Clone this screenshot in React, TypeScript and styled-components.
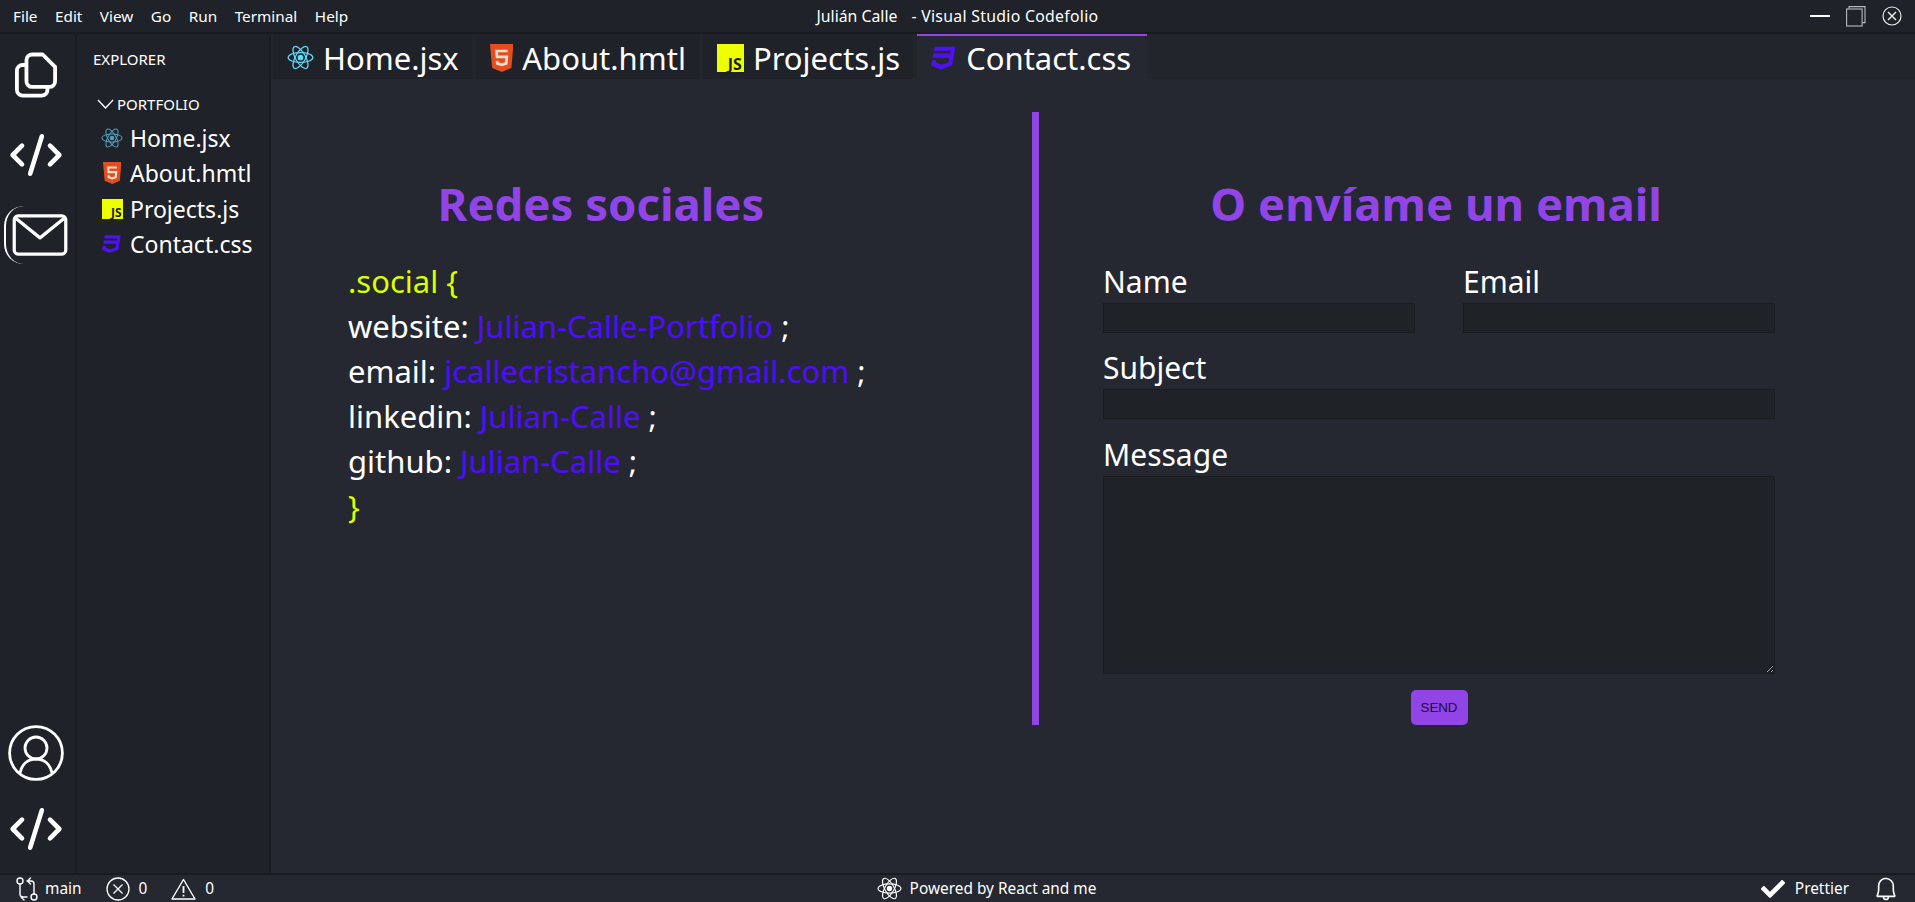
import React from "react";
import styled, { createGlobalStyle } from "styled-components";
import { CodeXml } from "lucide-react";
import { FaCheck, FaCss3 } from "react-icons/fa";
import { VscBell } from "react-icons/vsc";

const uiFont = `"Noto Sans", "Open Sans", sans-serif`;
const purple = "#9145e6";

const GlobalStyle = createGlobalStyle`
  html, body {
    margin: 0;
    height: 100%;
    overflow: hidden;
    background: #252830;
    color: #fff;
    font-family: ${uiFont};
  }
  * { box-sizing: border-box; }
`;

/* icons */
const ReactIcon = ({ size, color }: { size: number; color: string }) => (
  <svg width={size} height={size} viewBox="0 0 24 24" fill="none" stroke={color} strokeWidth="1.1">
    <ellipse cx="12" cy="12" rx="11" ry="4.4" />
    <ellipse cx="12" cy="12" rx="11" ry="4.4" transform="rotate(60 12 12)" />
    <ellipse cx="12" cy="12" rx="11" ry="4.4" transform="rotate(120 12 12)" />
    <circle cx="12" cy="12" r="2" fill={color} />
  </svg>
);

const HtmlIcon = ({ height }: { height: number }) => (
  <svg width={height * 0.84} height={height} viewBox="2 0 20 24" preserveAspectRatio="none">
    <path d="M2 0h20l-1.800 20.500L12 24l-8.200-3.500z" fill="#e44d1e" />
    <path d="M17 6H7.600l.4 5h8.300l-.5 5.600-3.800 1.200-3.800-1.200-.2-2.200" fill="none" stroke="#f4dccf" strokeWidth="2.300" />
  </svg>
);

const FilesIcon = () => (
  <svg width="42" height="47" viewBox="0 0 44 48" fill="none" stroke="#fff" strokeWidth="4" strokeLinejoin="round">
    <path d="M12 13H8a6 6 0 0 0-6 6v20a6 6 0 0 0 6 6h20a6 6 0 0 0 6-6v-3" />
    <path d="M18 2h11l13 13v15a6 6 0 0 1-6 6H18a6 6 0 0 1-6-6V8a6 6 0 0 1 6-6z" />
  </svg>
);

const MailIcon = () => (
  <svg width="56" height="42" viewBox="0 0 58 44" fill="none" stroke="#fff" strokeWidth="3.400" strokeLinejoin="round">
    <rect x="2" y="2" width="54" height="40" rx="4" />
    <path d="M3 4l26 21L55 4" />
  </svg>
);

const UserIcon = () => (
  <svg width="56" height="56" viewBox="0 0 56 56" fill="none" stroke="#fff" strokeWidth="2.800">
    <circle cx="28" cy="28" r="26.400" />
    <circle cx="28" cy="23" r="11" />
    <path d="M12 48c2-9 8-14 16-14s14 5 16 14" />
  </svg>
);

const BranchIcon = () => (
  <svg width="22" height="24" viewBox="0 0 22 24" fill="none" stroke="#fff" strokeWidth="1.400" strokeLinecap="round" strokeLinejoin="round">
    <circle cx="4" cy="4" r="3" />
    <circle cx="18" cy="20" r="3" />
    <path d="M4 7v10c0 2 1 3 3 3h4M8 23l-3-3" />
    <path d="M18 17V7c0-2-1-3-3-3h-4M14.500 1l-3 3 3 3" />
  </svg>
);

const ErrorIcon = () => (
  <svg width="24" height="24" viewBox="0 0 24 24" fill="none" stroke="#fff" strokeWidth="1.300">
    <circle cx="12" cy="12" r="11" />
    <path d="M7.500 7.500l9 9M16.500 7.500l-9 9" />
  </svg>
);

const WarningIcon = () => (
  <svg width="25" height="22" viewBox="0 0 25 22" fill="none" stroke="#fff" strokeWidth="1.400" strokeLinejoin="round">
    <path d="M12.500 1.500L24 21H1z" />
    <path d="M12.500 8v7M12.500 16.800v1.800" strokeWidth="1.800" />
  </svg>
);

const RestoreIcon = () => (
  <svg width="20" height="21" viewBox="0 0 20 21" fill="none" stroke="#b9bbbd" strokeWidth="1.100">
    <path d="M3 2.500V.6h16v16h-2.500" />
    <rect x="0.600" y="3" width="15.500" height="17" />
  </svg>
);

const CloseIcon = () => (
  <svg width="20" height="20" viewBox="0 0 20 20" fill="none" stroke="#e8e8e8" strokeWidth="1.200">
    <circle cx="10" cy="10" r="9" />
    <path d="M6 6l8 8M14 6l-8 8" strokeWidth="1.500" />
  </svg>
);

/* data */
const menus = ["File", "Edit", "View", "Go", "Run", "Terminal", "Help"];

const files = [
  { name: "Home.jsx", kind: "react" },
  { name: "About.hmtl", kind: "html" },
  { name: "Projects.js", kind: "js" },
  { name: "Contact.css", kind: "css" },
];

const FileIcon = ({ kind, large }: { kind: string; large?: boolean }) => {
  if (kind === "react") return <ReactIcon size={large ? 27 : 22} color={large ? "#61dafb" : "#4fa3bd"} />;
  if (kind === "html") return <HtmlIcon height={large ? 28 : 22} />;
  if (kind === "js") return <JsBadge $large={large}>JS</JsBadge>;
  return <FaCss3 size={large ? 26 : 20} color="#5010f5" />;
};

const social = [
  { key: "website", value: "Julian-Calle-Portfolio" },
  { key: "email", value: "jcallecristancho@gmail.com" },
  { key: "linkedin", value: "Julian-Calle" },
  { key: "github", value: "Julian-Calle" },
];

export default function App() {
  return (
    <>
      <GlobalStyle />
      <Window>
        <TitleBar>
          <Menu>
            {menus.map((m) => (
              <span key={m}>{m}</span>
            ))}
          </Menu>
          <WindowTitle>
            <span>Julián Calle</span>
            <TitleSuffix>- Visual Studio Codefolio</TitleSuffix>
          </WindowTitle>
          <WindowControls>
            <MinimizeDash />
            <RestoreIcon />
            <CloseIcon />
          </WindowControls>
        </TitleBar>

        <Workbench>
          <ActivityBar>
            <ActivityGroup>
              <ActivityItem>
                <FilesIcon />
              </ActivityItem>
              <ActivityItem>
                <CodeXml size={56} strokeWidth={2} color="#fff" />
              </ActivityItem>
              <ActivityItem $active>
                <MailIcon />
              </ActivityItem>
            </ActivityGroup>
            <BottomGroup>
              <UserIcon />
              <CodeXml size={56} strokeWidth={2} color="#fff" />
            </BottomGroup>
          </ActivityBar>

          <Sidebar>
            <SidebarTitle>EXPLORER</SidebarTitle>
            <FolderRow>
              <svg width="17" height="10" viewBox="0 0 17 10" fill="none" stroke="#fff" strokeWidth="1.400">
                <path d="M1 1l7.500 8L16 1" />
              </svg>
              PORTFOLIO
            </FolderRow>
            {files.map((f) => (
              <FileRow key={f.name}>
                <FileIconSlot>
                  <FileIcon kind={f.kind} />
                </FileIconSlot>
                {f.name}
              </FileRow>
            ))}
          </Sidebar>

          <EditorArea>
            <Tabs>
              {files.map((f) => (
                <Tab key={f.name} $active={f.kind === "css"}>
                  <FileIcon kind={f.kind} large />
                  {f.name}
                </Tab>
              ))}
            </Tabs>
            <Content>
              <SocialColumn>
                <Heading $shift={178}>Redes sociales</Heading>
                <Code>
                  <Brace>.social {"{"}</Brace>
                  {social.map((s) => (
                    <div key={s.key}>
                      {s.key}: <CodeLink>{s.value}</CodeLink> ;
                    </div>
                  ))}
                  <Brace>{"}"}</Brace>
                </Code>
              </SocialColumn>
              <Divider />
              <FormColumn>
                <Heading $shift={6}>O envíame un email</Heading>
                <Form onSubmit={(e) => e.preventDefault()}>
                  <TwoFields>
                    <Field>
                      <Label>Name</Label>
                      <Input />
                    </Field>
                    <Field>
                      <Label>Email</Label>
                      <Input />
                    </Field>
                  </TwoFields>
                  <Field>
                    <Label>Subject</Label>
                    <Input />
                  </Field>
                  <Field>
                    <Label>Message</Label>
                    <TextArea />
                  </Field>
                  <SendButton>SEND</SendButton>
                </Form>
              </FormColumn>
            </Content>
          </EditorArea>
        </Workbench>

        <StatusBar>
          <StatusGroup>
            <StatusItem $gap={7}>
              <BranchIcon />
              main
            </StatusItem>
            <StatusItem $gap={9}>
              <ErrorIcon />0
            </StatusItem>
            <StatusItem $gap={9}>
              <WarningIcon />0
            </StatusItem>
          </StatusGroup>
          <StatusCenter>
            <ReactIcon size={25} color="#fff" />
            Powered by React and me
          </StatusCenter>
          <StatusGroup>
            <StatusItem $gap={10}>
              <FaCheck size={24} />
              Prettier
            </StatusItem>
            <VscBell size={26} />
          </StatusGroup>
        </StatusBar>
      </Window>
    </>
  );
}

const Window = styled.div`
  height: 100vh;
  display: flex;
  flex-direction: column;
`;

const TitleBar = styled.header`
  flex: none;
  height: 34px;
  display: grid;
  grid-template-columns: 1fr auto 1fr;
  align-items: center;
  background: #1f2228;
  border-bottom: 2px solid #191b20;
  font-size: 15.300px;
`;
const Menu = styled.nav`
  display: flex;
  gap: 17.500px;
  padding-left: 13px;
`;
const WindowTitle = styled.div`
  display: flex;
  gap: 14px;
  font-size: 15.800px;
`;
const TitleSuffix = styled.span`
  letter-spacing: 0.300px;
`;
const WindowControls = styled.div`
  display: flex;
  align-items: center;
  justify-content: flex-end;
  gap: 16px;
  padding-right: 13px;
`;
const MinimizeDash = styled.div`
  width: 20px;
  height: 2px;
  background: #fff;
`;

const Workbench = styled.div`
  flex: 1;
  min-height: 0;
  display: flex;
`;

const ActivityBar = styled.aside`
  flex: none;
  width: 77px;
  display: flex;
  flex-direction: column;
  justify-content: space-between;
  background: #1f2228;
  border-right: 2px solid #191b20;
  padding: 14px 3px 16px 0;
`;
const ActivityGroup = styled.div`
  display: flex;
  flex-direction: column;
  align-items: center;
  gap: 26px;
`;
const ActivityItem = styled.div<{ $active?: boolean }>`
  position: relative;
  height: 54px;
  width: 100%;
  display: flex;
  align-items: center;
  justify-content: center;
  ${(p) =>
    p.$active &&
    `
    padding-left: 8px;
    &::before {
      content: "";
      position: absolute;
      left: 4px;
      top: -2px;
      width: 22px;
      height: 58px;
      border-left: 2px solid #fff;
      border-radius: 20px 0 0 20px;
    }
  `}
`;
const BottomGroup = styled.div`
  display: flex;
  flex-direction: column;
  align-items: center;
  gap: 20px;
`;

const Sidebar = styled.aside`
  flex: none;
  width: 194px;
  background: #1f2228;
  border-right: 2px solid #191b20;
  padding: 14px 0 0 16px;
`;
const SidebarTitle = styled.div`
  font-size: 15px;
  line-height: 22px;
`;
const FolderRow = styled.div`
  display: flex;
  align-items: center;
  gap: 3px;
  margin: 23px 0 5px 4px;
  font-size: 15px;
  line-height: 22px;
`;
const FileRow = styled.div`
  display: flex;
  align-items: center;
  height: 35.500px;
  padding-left: 8px;
  gap: 7px;
  font-size: 23px;
`;
const FileIconSlot = styled.span`
  display: flex;
  align-items: center;
  justify-content: center;
  width: 22px;
`;
const JsBadge = styled.span<{ $large?: boolean }>`
  display: flex;
  align-items: flex-end;
  justify-content: flex-end;
  flex: none;
  width: ${(p) => (p.$large ? 27 : 21)}px;
  height: ${(p) => (p.$large ? 28 : 20)}px;
  padding-right: ${(p) => (p.$large ? 2 : 1)}px;
  background: #eeff00;
  color: #1b1b1b;
  font-size: ${(p) => (p.$large ? 16 : 12)}px;
  font-weight: 700;
  line-height: 1;
`;

const EditorArea = styled.main`
  flex: 1;
  min-width: 0;
  display: flex;
  flex-direction: column;
  background: #252830;
`;
const Tabs = styled.div`
  flex: none;
  height: 45px;
  display: flex;
  gap: 4px;
  padding-left: 2px;
  background: #22252b;
`;
const Tab = styled.div<{ $active?: boolean }>`
  display: flex;
  align-items: center;
  gap: 9px;
  padding: 0 ${(p) => (p.$active ? 16 : 13)}px 0 14px;
  font-size: 31px;
  background: ${(p) => (p.$active ? "#252830" : "#1f2228")};
  border-top: 2px solid ${(p) => (p.$active ? purple : "transparent")};
`;

const Content = styled.section`
  flex: 1;
  display: flex;
  align-items: flex-start;
  padding-top: 33px;
`;
const SocialColumn = styled.div`
  width: 761px;
  padding-left: 77px;
`;
const Heading = styled.h2<{ $shift?: number }>`
  margin: 0;
  height: 127px;
  padding: 62px ${(p) => p.$shift ?? 0}px 0 0;
  color: ${purple};
  font-size: 45.500px;
  font-weight: 700;
  line-height: 58px;
  text-align: center;
`;
const Code = styled.div`
  margin-top: 20px;
  font-size: 31px;
  line-height: 45px;
`;
const Brace = styled.div`
  color: #dcff00;
`;
const CodeLink = styled.span`
  color: #4f0dff;
`;
const Divider = styled.div`
  flex: none;
  width: 7px;
  height: 613px;
  background: ${purple};
`;
const FormColumn = styled.div`
  width: 672px;
  margin-left: 64px;
`;
const Form = styled.form`
  display: flex;
  flex-direction: column;
  gap: 14.500px;
  margin-top: 21.500px;
`;
const TwoFields = styled.div`
  display: grid;
  grid-template-columns: 312px 312px;
  gap: 48px;
`;
const Field = styled.div`
  display: flex;
  flex-direction: column;
`;
const Label = styled.label`
  font-size: 30px;
  line-height: 42px;
`;
const Input = styled.input`
  height: 30px;
  background: #1f2227;
  border: 1px solid #1a1c20;
  outline: none;
`;
const TextArea = styled.textarea`
  height: 198px;
  background: #1f2227;
  border: 1px solid #1a1c20;
  outline: none;
`;
const SendButton = styled.button`
  align-self: center;
  width: 57px;
  height: 35px;
  margin-top: 1.500px;
  padding: 0;
  border: none;
  border-radius: 5px;
  background: ${purple};
  color: #1a0a33;
  font-family: "Liberation Sans", sans-serif;
  font-size: 13.300px;
`;

const StatusBar = styled.footer`
  flex: none;
  height: 29px;
  display: grid;
  grid-template-columns: 1fr auto 1fr;
  align-items: center;
  padding: 0 16px;
  background: #252830;
  border-top: 2px solid #191b20;
  font-size: 15.400px;
`;
const StatusGroup = styled.div`
  display: flex;
  align-items: center;
  gap: 24px;
  &:last-child {
    justify-content: flex-end;
  }
`;
const StatusItem = styled.div<{ $gap: number }>`
  display: flex;
  align-items: center;
  gap: ${(p) => p.$gap}px;
`;
const StatusCenter = styled.div`
  display: flex;
  align-items: center;
  gap: 8px;
  margin-left: 58px;
`;
